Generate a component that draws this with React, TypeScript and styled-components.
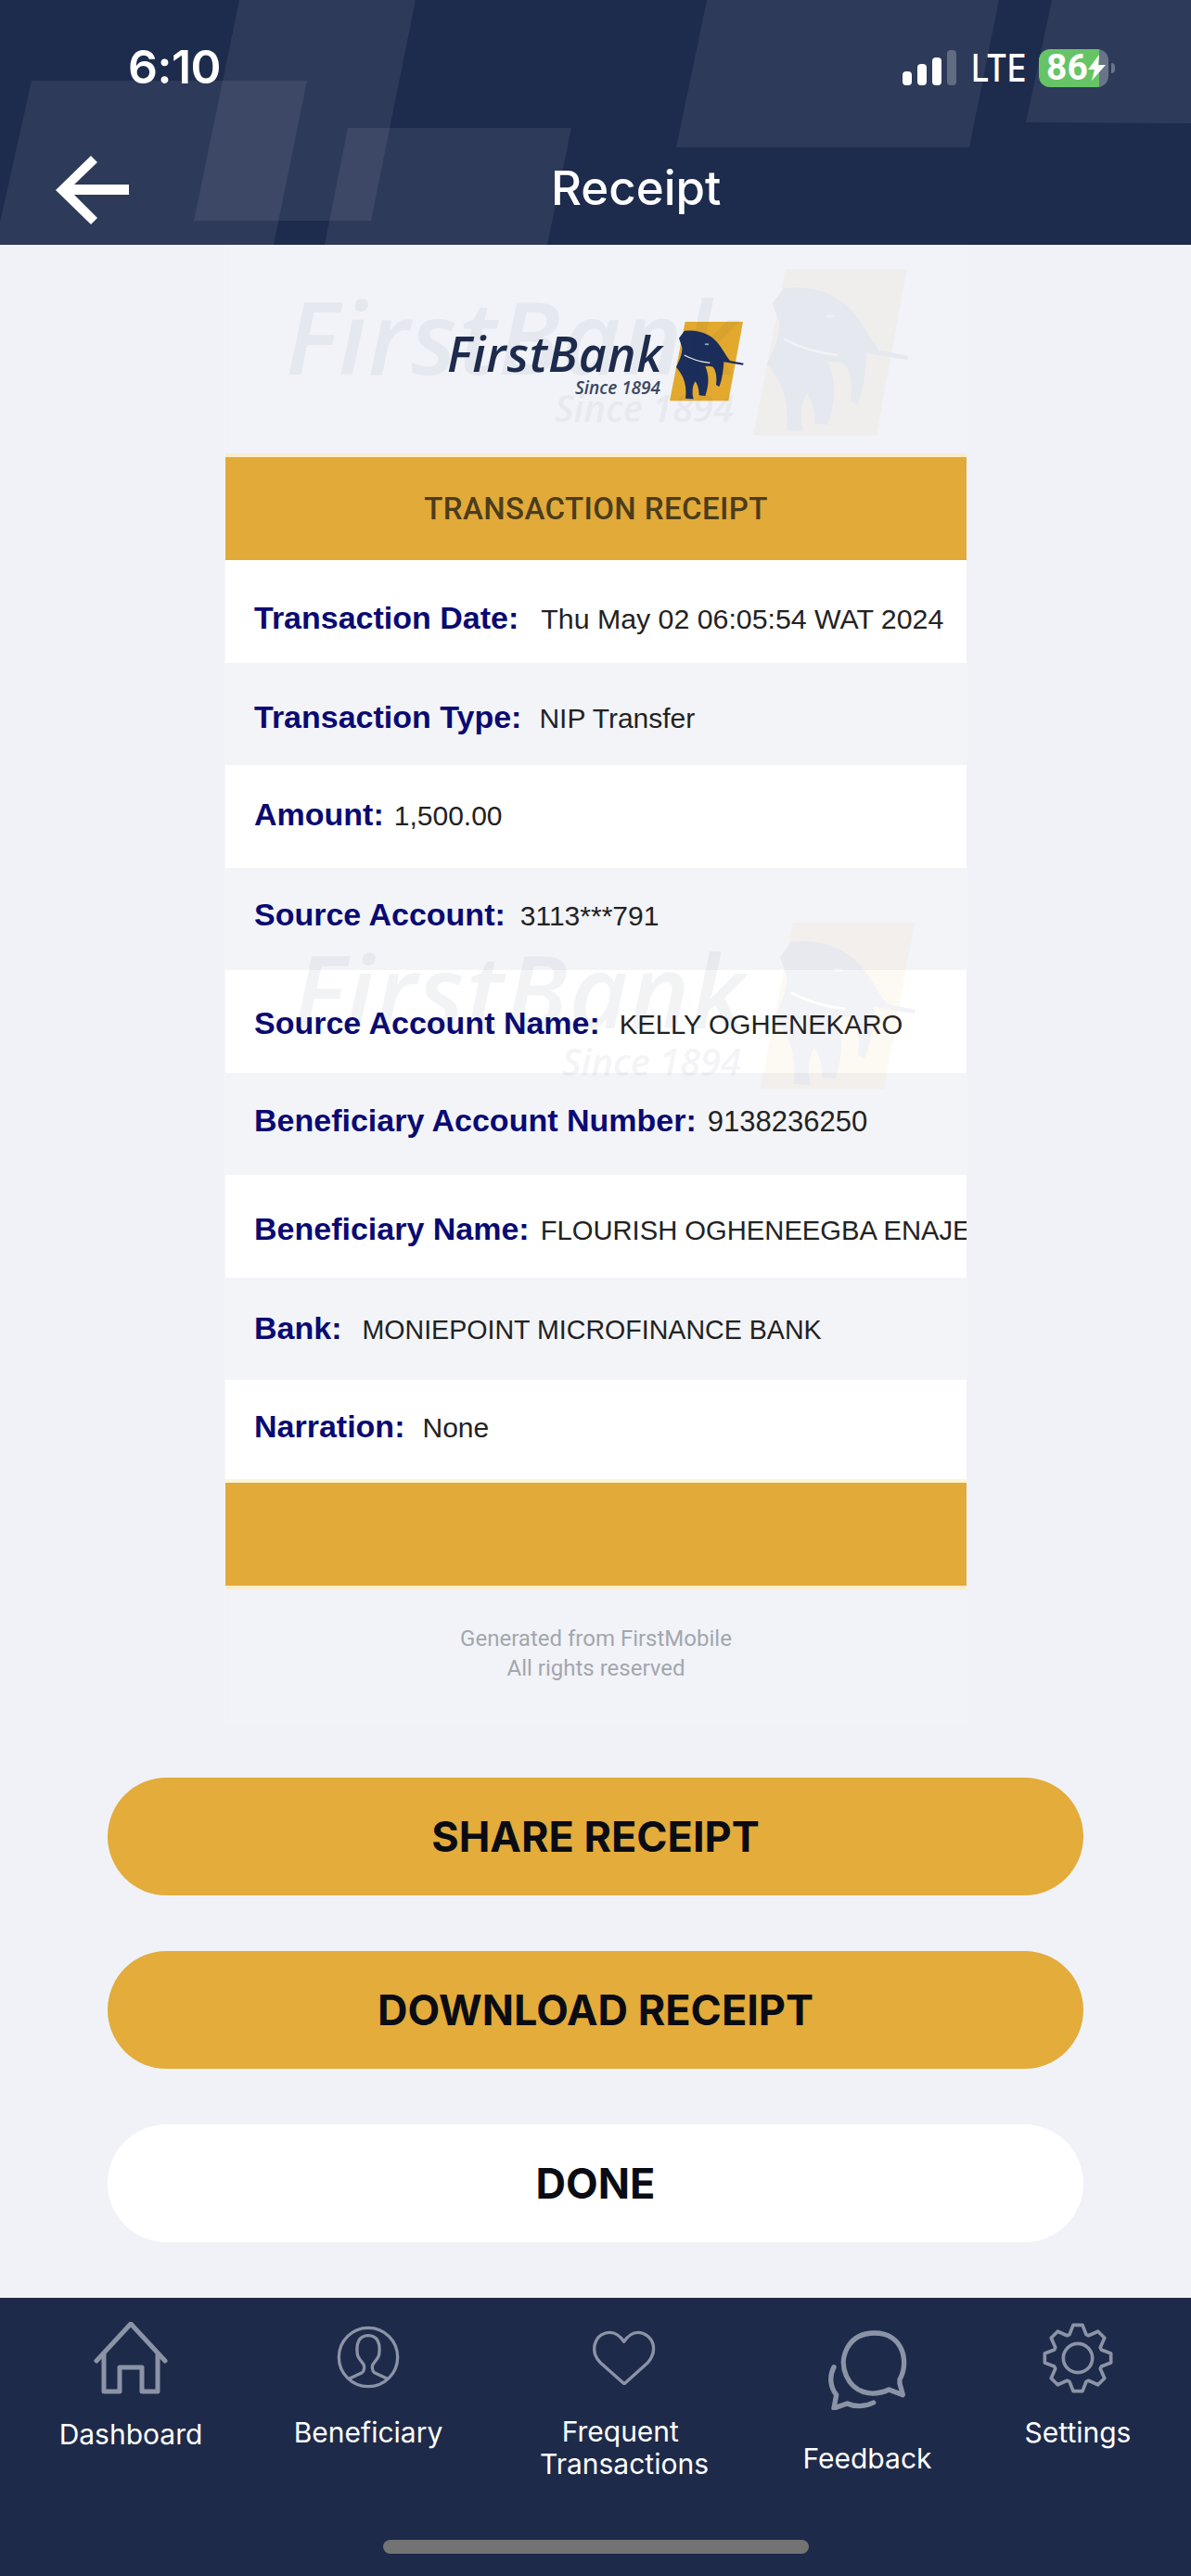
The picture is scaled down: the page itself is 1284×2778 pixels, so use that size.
import React from "react";
import styled, { createGlobalStyle } from "styled-components";

const Global = createGlobalStyle`
  html, body { margin: 0; padding: 0; background: #f0f2f7; }
  * { box-sizing: border-box; }
  #root { width: 1284px; height: 2778px; overflow: hidden; }
`;

const Page = styled.div`
  width: 1284px;
  height: 2778px;
  display: flex;
  flex-direction: column;
  background: #f0f2f7;
  font-family: Inter, "Liberation Sans", sans-serif;
`;

const Header = styled.header`
  position: relative;
  height: 264px;
  flex: none;
  background: #1d2b4c;
  color: #fff;
  overflow: hidden;
`;
const HeaderArt = styled.svg`
  position: absolute;
  inset: 0;
`;
const StatusRow = styled.div`
  position: relative;
  height: 146px;
  display: flex;
  align-items: center;
  padding: 0 82px 0 138px;
`;
const Time = styled.span`
  margin-bottom: 2px;
  font-size: 50px;
  font-weight: 600;
  letter-spacing: -0.5px;
`;
const StatusRight = styled.div`
  margin-left: auto;
  display: flex;
  align-items: center;
  gap: 16px;
`;
const Lte = styled.span`
  display: block;
  width: 57px;
  font-size: 41px;
  font-weight: 500;
  line-height: 1;
  white-space: nowrap;
  transform: scaleX(0.84);
  transform-origin: left center;
`;
const Battery = styled.div`
  position: relative;
  width: 75px;
  height: 41px;
  margin-right: 7px;
  border-radius: 12px;
  background: linear-gradient(90deg, #66c466 65px, #6a7389 65px);
  display: flex;
  align-items: center;
  padding-left: 8px;
  font-family: Roboto, sans-serif;
  font-size: 39px;
  font-weight: 700;
  line-height: 1;
  &::after {
    content: "";
    position: absolute;
    left: 78px;
    top: 15px;
    width: 4px;
    height: 11px;
    border-radius: 0 5px 5px 0;
    background: #6a7389;
  }
`;
const NavRow = styled.div`
  position: relative;
  height: 118px;
  display: flex;
  align-items: center;
  padding-left: 60px;
`;
const Title = styled.h1`
  margin: 0 0 5px 455px;
  font-size: 51px;
  font-weight: 500;
  line-height: 1;
`;

const Main = styled.main`
  flex: 1;
  display: flex;
  flex-direction: column;
`;
const Panel = styled.section`
  position: relative;
  width: 799px;
  height: 1593px;
  margin-left: 243px;
  background: #f1f3f8;
  box-shadow: -1px 0 0 #f5f6f9;
`;
const LogoArea = styled.div`
  height: 229px;
  padding: 83px 0 0 239px;
`;
const Logo = styled.div<{ $s: number }>`
  display: inline-flex;
  align-items: flex-start;
  gap: ${(p) => 4 * p.$s}px;
  color: #1d2b4c;
  svg {
    width: ${(p) => 80 * p.$s}px;
    height: ${(p) => 86 * p.$s}px;
    flex: none;
  }
  b {
    display: block;
    width: ${(p) => 236 * p.$s}px;
    margin-top: ${(p) => 8 * p.$s}px;
    font-family: "Open Sans", sans-serif;
    font-size: ${(p) => 52 * p.$s}px;
    font-style: italic;
    font-weight: 600;
    line-height: 1;
    letter-spacing: ${(p) => 0.9 * p.$s}px;
    white-space: nowrap;
  }
  i {
    display: block;
    margin-top: ${(p) => 2 * p.$s}px;
    padding-right: ${(p) => 6 * p.$s}px;
    text-align: right;
    font-family: "Open Sans", sans-serif;
    font-size: ${(p) => 19 * p.$s}px;
    font-weight: 600;
    line-height: 1;
    color: #3b4660;
    white-space: nowrap;
  }
`;
const Watermark = styled.div<{ $x: number; $y: number }>`
  position: absolute;
  left: ${(p) => p.$x}px;
  top: ${(p) => p.$y}px;
  opacity: 0.05;
  pointer-events: none;
`;
const Banner = styled.div`
  height: 111px;
  background: #e2aa39;
  box-shadow: 0 -4px 0 #fbeccb;
  display: flex;
  align-items: center;
  justify-content: center;
  font-family: Roboto, sans-serif;
  font-size: 33px;
  font-weight: 500;
  letter-spacing: 0.4px;
  color: #4b3c1c;
`;
const Row = styled.div<{ $alt: boolean; $top: number }>`
  height: 110.55px;
  padding: ${(p) => p.$top}px 0 0 31px;
  display: flex;
  align-items: flex-start;
  overflow: hidden;
  white-space: nowrap;
  background: ${(p) => (p.$alt ? "#f3f4f8" : "#fff")};
  font-family: "Liberation Sans", Arial, sans-serif;
  line-height: 40px;
`;
const Label = styled.span`
  flex: none;
  font-size: 34px;
  font-weight: 700;
  color: #0a0a72;
`;
const Value = styled.span<{ $gap: number; $size: number }>`
  flex: none;
  margin: 2px 0 0 ${(p) => p.$gap}px;
  font-size: ${(p) => p.$size}px;
  color: #222;
`;
const FootBar = styled.div`
  height: 111px;
  background: #e2aa39;
  box-shadow: 0 -4px 0 #fdf6d8, 0 4px 0 #fbeccb;
`;
const Legal = styled.p`
  margin: 41px 0 0;
  text-align: center;
  font-family: Roboto, sans-serif;
  font-size: 24px;
  line-height: 32px;
  color: #a3a6ae;
`;

const Actions = styled.div`
  margin: 60px 116px 0;
  display: flex;
  flex-direction: column;
  gap: 60px;
`;
const Action = styled.button<{ $light?: boolean }>`
  height: 127px;
  border: 0;
  border-radius: 64px;
  background: ${(p) => (p.$light ? "#fff" : "#e3ac3b")};
  color: #0a0c14;
  font-family: Inter, sans-serif;
  font-size: 45px;
  font-weight: 700;
`;

const BottomNav = styled.nav`
  height: 300px;
  flex: none;
  display: flex;
  flex-direction: column;
  background: #1e2a49;
  color: #fff;
`;
const Tabs = styled.div`
  height: 261px;
  padding: 26px 0 0 24px;
  display: grid;
  grid-template-columns: 234px 278px 274px 250px 204px;
`;
const Tab = styled.div<{ $top: number; $gap: number }>`
  display: flex;
  flex-direction: column;
  align-items: center;
  padding-top: ${(p) => p.$top}px;
  gap: ${(p) => p.$gap}px;
  svg {
    display: block;
    flex: none;
    fill: none;
    stroke: #8a94a6;
    stroke-linejoin: round;
    stroke-linecap: round;
  }
`;
const TabLabel = styled.span`
  font-size: 30px;
  line-height: 35px;
  text-align: center;
`;
const HomeBar = styled.div`
  width: 459px;
  height: 15px;
  margin: 0 auto;
  border-radius: 8px;
  background: #737373;
`;

const gear = (() => {
  const cx = 213;
  const cy = 155;
  const tooth = [
    [-15, -107],
    [15, -107],
    [27, -76],
  ];
  const pts: string[] = [];
  for (let k = 0; k < 8; k++) {
    const a = (k * Math.PI) / 4;
    const c = Math.cos(a);
    const s = Math.sin(a);
    const list = [[-27, -76], ...tooth];
    list.forEach(([x, y]) => {
      pts.push(`${(cx + x * c - y * s).toFixed(1)},${(cy + x * s + y * c).toFixed(1)}`);
    });
  }
  return pts.join(" ");
})();

const Mark = () => (
  <svg viewBox="785 82 240 258">
    <polygon points="835,82 1022,82 975,338 785,338" fill="#e3a92e" />
    <path
      d="M815 135 L832 112 C860 108 895 112 925 135 C950 155 965 190 980 208 L1024 216 L1022 222 L960 212 C958 240 955 270 945 292 L935 286 C938 260 935 240 925 228 C915 225 905 226 900 225 C915 260 910 290 900 322 L880 320 C880 300 875 285 868 275 C860 285 855 310 862 332 L836 330 C840 300 835 270 820 248 L806 228 C818 205 826 185 825 165 Z"
      fill="#1b2e5c"
    />
    <path d="M832 190 C860 205 885 212 915 215" fill="none" stroke="#f3efe3" strokeWidth="4" />
    <ellipse cx="905" cy="155" rx="7" ry="3" fill="#9fb0c8" />
  </svg>
);

const FirstBankLogo = ({ s }: { s: number }) => (
  <Logo $s={s}>
    <div>
      <b>FirstBank</b>
      <i>Since 1894</i>
    </div>
    <Mark />
  </Logo>
);

const rows: { l: string; v: string; gap: number; top: number; size: number }[] = [
  { l: "Transaction Date:", v: "Thu May 02 06:05:54 WAT 2024", gap: 24, top: 42, size: 30.3 },
  { l: "Transaction Type:", v: "NIP Transfer", gap: 19, top: 38, size: 30 },
  { l: "Amount:", v: "1,500.00", gap: 11, top: 33, size: 30 },
  { l: "Source Account:", v: "3113***791", gap: 16, top: 30, size: 30 },
  { l: "Source Account Name:", v: "KELLY OGHENEKARO", gap: 21, top: 37, size: 29.2 },
  { l: "Beneficiary Account Number:", v: "9138236250", gap: 12, top: 31, size: 31 },
  { l: "Beneficiary Name:", v: "FLOURISH OGHENEEGBA ENAJEI", gap: 12, top: 38, size: 29.2 },
  { l: "Bank:", v: "MONIEPOINT MICROFINANCE BANK", gap: 22, top: 34, size: 28.6 },
  { l: "Narration:", v: "None", gap: 19, top: 30, size: 30 },
];

export default function App() {
  return (
    <Page>
      <Global />
      <Header>
        <HeaderArt width="1284" height="264" viewBox="0 0 1284 264">
          <g fill="#fff" fillOpacity="0.075">
            <polygon points="258,0 448,0 400,238 209,238" />
            <polygon points="34,87 331,87 295,264 0,264 0,240" />
            <polygon points="375,138 616,138 590,264 350,264" />
            <polygon points="762,0 1077,0 1045,159 729,159" />
            <polygon points="1134,0 1284,0 1284,133 1106,132" />
          </g>
        </HeaderArt>
        <StatusRow>
          <Time>6:10</Time>
          <StatusRight>
            <svg width="58" height="38" viewBox="0 0 58 38">
              <rect x="0" y="23" width="10" height="15" rx="4" fill="#fff" />
              <rect x="16" y="15" width="10" height="23" rx="4" fill="#fff" />
              <rect x="32" y="8" width="10" height="30" rx="4" fill="#fff" />
              <rect x="48" y="0" width="10" height="38" rx="4" fill="#fff" fillOpacity="0.25" />
            </svg>
            <Lte>LTE</Lte>
            <Battery>
              86
              <svg width="19" height="28" viewBox="0 0 19 28">
                <polygon points="12,0 0,16 7,16 4,28 19,11 11,11" fill="#fff" />
              </svg>
            </Battery>
          </StatusRight>
        </StatusRow>
        <NavRow>
          <svg width="79" height="74" viewBox="0 0 79 74">
            <polygon
              points="38,0 45,7 20,31 79,31 79,42 20,42 45,67 38,74 0,37"
              fill="#fff"
            />
          </svg>
          <Title>Receipt</Title>
        </NavRow>
      </Header>

      <Main>
        <Panel>
          <Watermark $x={65} $y={26}>
            <FirstBankLogo s={2.1} />
          </Watermark>
          <LogoArea>
            <FirstBankLogo s={1} />
          </LogoArea>
          <Banner>TRANSACTION RECEIPT</Banner>
          {rows.map((r, i) => (
            <Row key={r.l} $alt={i % 2 === 1} $top={r.top}>
              <Label>{r.l}</Label>
              <Value $gap={r.gap} $size={r.size}>
                {r.v}
              </Value>
            </Row>
          ))}
          <FootBar />
          <Legal>
            Generated from FirstMobile
            <br />
            All rights reserved
          </Legal>
          <Watermark $x={73} $y={731}>
            <FirstBankLogo s={2.1} />
          </Watermark>
        </Panel>

        <Actions>
          <Action>SHARE RECEIPT</Action>
          <Action>DOWNLOAD RECEIPT</Action>
          <Action $light>DONE</Action>
        </Actions>
      </Main>

      <BottomNav>
        <Tabs>
          <Tab $top={0} $gap={26}>
            <svg width="80" height="78" viewBox="0 0 80 78" strokeWidth="5">
              <path d="M3 42 L40 2 L77 42" />
              <path d="M11 34 V75 H28 V49 H52 V75 H69 V34" />
            </svg>
            <TabLabel>Dashboard</TabLabel>
          </Tab>
          <Tab $top={4} $gap={30}>
            <svg width="68" height="68" viewBox="848 53 204 204" strokeWidth="10">
              <circle cx="950" cy="155" r="95" />
              <path d="M888 225 L930 205 C938 200 938 185 935 178 C925 165 915 155 915 145 C910 110 920 85 950 85 C980 85 990 110 985 145 C985 155 975 165 965 178 C962 185 962 200 970 205 L1012 225" />
            </svg>
            <TabLabel>Beneficiary</TabLabel>
          </Tab>
          <Tab $top={8} $gap={33}>
            <svg width="70" height="60" viewBox="47 62 210 180" strokeWidth="10">
              <path d="M152 238 L75 170 C55 150 52 130 57 110 C65 80 90 72 105 72 C125 72 140 85 151 102 C162 85 177 72 197 72 C215 72 238 85 245 110 C250 130 245 150 228 170 Z" />
            </svg>
            <TabLabel>
              Frequent&nbsp;
              <br />
              Transactions
            </TabLabel>
          </Tab>
          <Tab $top={8} $gap={35}>
            <svg width="88" height="87" viewBox="808 60 264 261" strokeWidth="16">
              <path d="M1045 222 C1075 170 1060 72 963 72 C880 72 845 150 872 210 C895 262 950 282 1010 255 L1055 272 L1045 235 Z" />
              <path d="M832 182 C815 215 822 250 840 272 L832 315 L875 300 C900 312 935 310 960 297" />
            </svg>
            <TabLabel>Feedback</TabLabel>
          </Tab>
          <Tab $top={0} $gap={24}>
            <svg width="78" height="78" viewBox="96 38 234 234" strokeWidth="11">
              <polygon points={gear} />
              <circle cx="213" cy="155" r="47" />
            </svg>
            <TabLabel>Settings</TabLabel>
          </Tab>
        </Tabs>
        <HomeBar />
      </BottomNav>
    </Page>
  );
}
